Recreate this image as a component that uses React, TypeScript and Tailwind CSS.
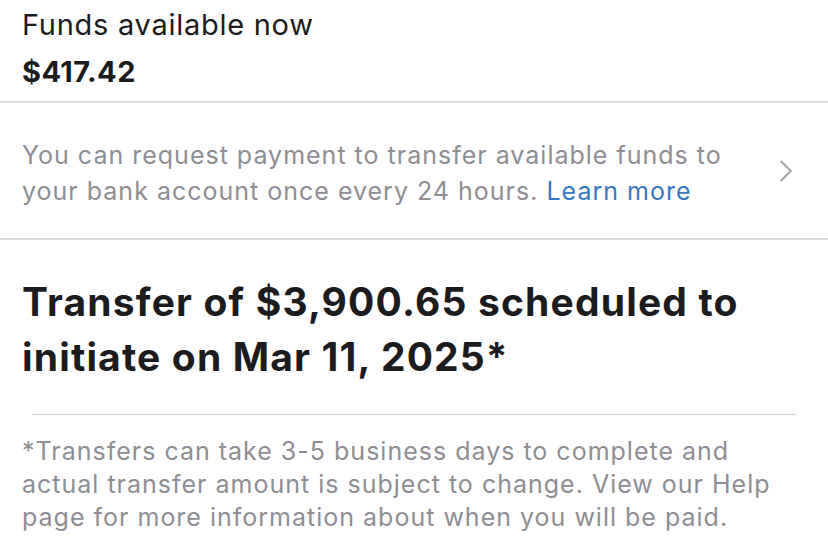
import { ChevronRight } from "lucide-react";

export default function App() {
  return (
    <div
      className="w-[828px] h-[547px] overflow-hidden bg-white"
      style={{ fontFamily: "Inter, Roboto, 'Liberation Sans', sans-serif" }}
    >
      {/* Funds available */}
      <div className="px-[22px] pt-[6px] h-[103px] border-b-2 border-[#d9d9d9]">
        <div className="text-[29px] leading-[38px] tracking-[0.025em] text-[#1c1c1e]">Funds available now</div>
        <div className="mt-[9px] text-[29px] leading-[38px] tracking-[0.015em] font-bold text-[#1c1c1e]">$417.42</div>
      </div>

      {/* Payment info row */}
      <div className="flex items-center h-[137px] border-b-2 border-[#d9d9d9] pl-[22px] pr-[23px]">
        <p className="flex-1 pt-[4px] text-[25px] leading-[36px] tracking-[0.04em] text-[#8e8e93]">
          You can request payment to transfer available funds to
          <br />
          your bank account once every 24 hours.{" "}
          <span className="text-[#3a78c2]">Learn more</span>
        </p>
        <ChevronRight size={38} strokeWidth={1.5} className="text-[#a9a9ae]" />
      </div>

      {/* Scheduled transfer */}
      <div className="px-[22px] pt-[34px] pb-[30px]">
        <h1 className="text-[39px] leading-[55px] tracking-[0.03em] font-bold text-[#1c1c1e]">
          Transfer of $3,900.65 scheduled to
          <br />
          initiate on Mar 11, 2025*
        </h1>
      </div>
      <div className="mx-[32px] h-px bg-[#d4d4d4]" />
      <p className="px-[22px] pt-[20px] text-[25px] leading-[33px] tracking-[0.04em] text-[#8e8e93]">
        *Transfers can take 3-5 business days to complete and
        <br />
        actual transfer amount is subject to change. View our Help
        <br />
        page for more information about when you will be paid.
      </p>
    </div>
  );
}
